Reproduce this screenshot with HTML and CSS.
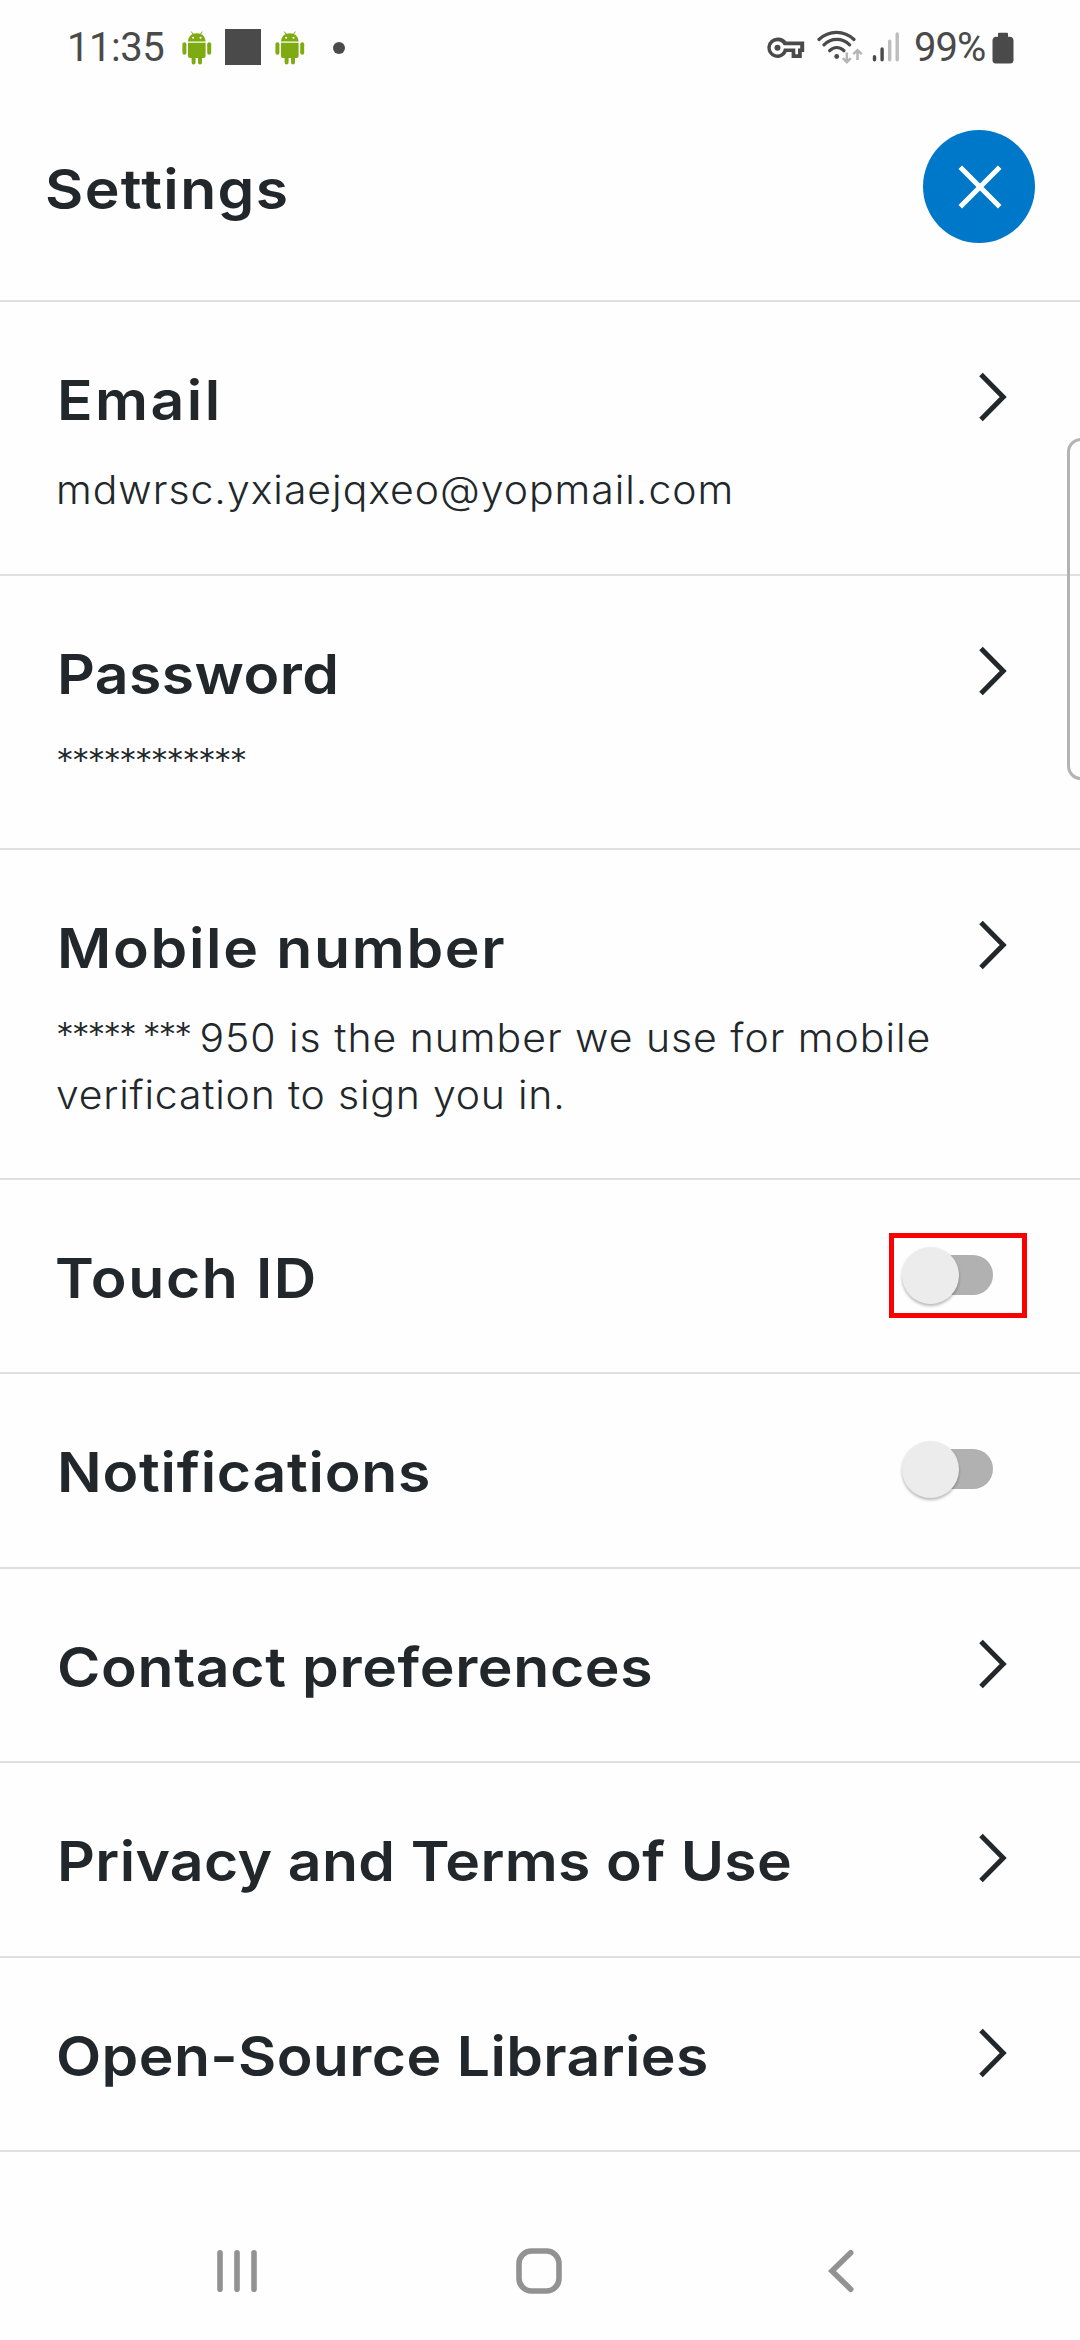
FILE: index.html
```html
<!DOCTYPE html>
<html lang="en">
<head>
<meta charset="utf-8">
<title>Settings</title>
<link rel="stylesheet" href="styles.css">
</head>
<body>
<svg class="defs" width="0" height="0" aria-hidden="true">
  <symbol id="android" viewBox="0 0 30 34">
    <path d="M6 10.500C6.300 5.500 9.500 2.300 14.800 2.300S23.300 5.500 23.600 10.500Z"/>
    <path d="M9.300 .6l2 3M20.300 .6l-2 3" stroke="#7fab12" stroke-width="1"/>
    <path d="M6 11.700h17.600v13.300a2 2 0 0 1-2 2h-1.600v4.500a2 2 0 0 1-4 0V27h-2.400v4.500a2 2 0 0 1-4 0V27H8a2 2 0 0 1-2-2Z"/>
    <rect x=".4" y="11.300" width="4" height="12.400" rx="2"/>
    <rect x="25.200" y="11.300" width="4" height="12.400" rx="2"/>
    <circle cx="11.100" cy="6.700" r="1" fill="#fff"/><circle cx="18.500" cy="6.700" r="1" fill="#fff"/>
  </symbol>
  <symbol id="chevron" viewBox="0 0 28 50">
    <path d="M2 2.500 24.200 25 2 47.500" fill="none" stroke="#21272a" stroke-width="5"/>
  </symbol>
</svg>
<div class="screen">
  <header class="status">
    <span class="clock">11:35</span>
    <svg class="droid" width="30" height="34"><use href="#android"/></svg>
    <span class="block"></span>
    <svg class="droid" width="30" height="34"><use href="#android"/></svg>
    <span class="dot"></span>
    <svg class="key" width="38" height="24" viewBox="0 0 38 24">
      <path fill-rule="evenodd" fill="#4a4a4a" d="M10.500 1.500a10.200 10.200 0 1 0 9.300 14.500h4.800v6h10.200v-6h2.400V5.500H19.300A10.200 10.200 0 0 0 10.500 1.500ZM10.500 5.300c2.700 0 5.100 1.500 6.200 4h16.500v3.300h-2.200v5.700h-2.700v-5.700H16.900a6.600 6.600 0 1 1-6.400-7.300Z"/>
      <circle cx="10.500" cy="11.700" r="3" fill="#4a4a4a"/>
    </svg>
    <svg class="wifi" width="46" height="36" viewBox="0 0 46 36">
      <g fill="none" stroke="#4a4a4a" stroke-width="3.200" stroke-linecap="round">
        <path d="M2 10.500C12 1 27 1 37 10.500M7 15.800c7.400-7.300 18.200-7.300 25.600 0M12.700 21.700c4-4.300 10.200-4.300 14.200 0"/>
      </g>
      <circle cx="19.700" cy="27.500" r="2.400" fill="#4a4a4a"/>
      <path d="M29.800 23.500v9M25.800 29.200l4 4 4-4M40.500 31v-9M36.300 25.200l4.200-4 4.200 4" fill="none" stroke="#b5b5b5" stroke-width="2.500"/>
    </svg>
    <svg class="signal" width="28" height="32" viewBox="0 0 28 32" stroke-width="3.400" stroke-linecap="round">
      <path d="M2.500 25.700v3M10.100 18v10.700" stroke="#4a4a4a"/>
      <path d="M17.700 10.200v18.500M25.200 3v25.700" stroke="#bdbdbd"/>
    </svg>
    <span class="percent">99%</span>
    <svg class="battery" width="22" height="32" viewBox="0 0 22 32">
      <path fill="#4a4a4a" d="M7 .7h8a1 1 0 0 1 1 1v3h1.500a4 4 0 0 1 4 4V28a3.500 3.500 0 0 1-3.500 3.500H4A3.500 3.500 0 0 1 .5 28V8.700a4 4 0 0 1 4-4H6v-3a1 1 0 0 1 1-1Z"/>
    </svg>
  </header>

  <div class="titlebar">
    <h1 class="title">Settings</h1>
    <button class="close" aria-label="Close">
      <svg width="44" height="44" viewBox="0 0 44 44"><path d="M2.300 2.300 41.700 41.700M41.700 2.300 2.300 41.700" stroke="#fff" stroke-width="5"/></svg>
    </button>
  </div>

  <main class="list">
    <section class="row tall">
      <div class="copy"><h2 class="name t-email">Email</h2><p class="note">mdwrsc.yxiaejqxeo@yopmail.com</p></div>
      <svg class="go" width="28" height="50"><use href="#chevron"/></svg>
    </section>
    <section class="row tall">
      <div class="copy"><h2 class="name t-password">Password</h2><p class="note"><span class="stars">************</span></p></div>
      <svg class="go" width="28" height="50"><use href="#chevron"/></svg>
    </section>
    <section class="row taller">
      <div class="copy"><h2 class="name t-mobile">Mobile number</h2><p class="note"><span class="stars">***** ***</span> <span class="n-first">950 is the number we use for mobile</span><br><span class="n-second">verification to sign you in.</span></p></div>
      <svg class="go" width="28" height="50"><use href="#chevron"/></svg>
    </section>
    <section class="row short">
      <h2 class="name t-touch">Touch ID</h2>
      <div class="switch"><span class="thumb"></span><span class="highlight"></span></div>
    </section>
    <section class="row">
      <h2 class="name t-notif">Notifications</h2>
      <div class="switch"><span class="thumb"></span></div>
    </section>
    <section class="row short">
      <h2 class="name t-contact">Contact preferences</h2>
      <svg class="go" width="28" height="50"><use href="#chevron"/></svg>
    </section>
    <section class="row">
      <h2 class="name t-privacy">Privacy and Terms of Use</h2>
      <svg class="go" width="28" height="50"><use href="#chevron"/></svg>
    </section>
    <section class="row short">
      <h2 class="name t-open">Open-Source Libraries</h2>
      <svg class="go" width="28" height="50"><use href="#chevron"/></svg>
    </section>
  </main>

  <nav class="softkeys">
    <svg width="46" height="48" viewBox="0 0 46 48"><path d="M6 5.700v36.600M23 5.700v36.600M40 5.700v36.600" stroke="#929292" stroke-width="5.600" stroke-linecap="round"/></svg>
    <svg class="home" width="48" height="48" viewBox="0 0 48 48"><rect x="4" y="4" width="40" height="40" rx="12.500" fill="none" stroke="#929292" stroke-width="5.600"/></svg>
    <svg width="30" height="48" viewBox="0 0 30 48"><path d="M24.700 5.800 6 24l18.700 18.200" fill="none" stroke="#929292" stroke-width="5.600" stroke-linecap="round"/></svg>
  </nav>
  <div class="edge-handle"></div>
</div>
</body>
</html>
```
FILE: styles.css
```css
* { box-sizing: border-box; }
body { margin: 0; background: #fefefe; }
.defs { position: absolute; }
.screen {
  position: relative;
  display: flex;
  flex-direction: column;
  width: 1080px;
  height: 2340px;
  overflow: hidden;
  background: #fefefe;
  color: #21272a;
  font-family: Inter, "Open Sans", sans-serif;
}

/* status bar */
.status {
  display: flex;
  align-items: center;
  height: 94px;
  padding: 0 66px 0 67px;
  color: #4a4a4a;
  font-family: Roboto, sans-serif;
  font-size: 40px;
}
.clock { width: 115px; white-space: nowrap; letter-spacing: -.5px; }
.droid { fill: #7fab12; margin-top: 1px; }
.block { width: 36px; height: 36px; margin: 0 14px 0 13px; background: #4a4a4a; }
.dot { width: 12px; height: 12px; margin: 2px auto 0 28px; border-radius: 50%; background: #4a4a4a; }
.key { margin: 2px 12px 0 0; }
.wifi { margin-right: 9px; }
.signal { margin-right: 14px; }
.percent { width: 78px; white-space: nowrap; letter-spacing: -1px; }
.battery { margin-top: 2px; }

/* title */
.titlebar {
  display: flex;
  justify-content: space-between;
  align-items: flex-start;
  height: 208px;
  padding: 36px 45px 0 45px;
  border-bottom: 2px solid #dfdfe3;
}
.title, .name {
  margin: 0;
  font-size: 55px;
  font-weight: 600;
  line-height: 66px;
  white-space: nowrap;
  transform: scaleX(1.07);
  transform-origin: left;
}
.title { margin-top: 26px; letter-spacing: 1.3px; }
.t-email { letter-spacing: 2.3px; }
.t-password { letter-spacing: .4px; }
.t-mobile { letter-spacing: 1.6px; }
.t-touch { letter-spacing: 1.5px; margin-left: -2px; }
.t-notif { letter-spacing: .7px; }
.t-contact { letter-spacing: .6px; }
.t-privacy { letter-spacing: .35px; }
.t-open { letter-spacing: .35px; margin-left: -1px; }
.close {
  display: grid;
  place-items: center;
  width: 112px;
  height: 113px;
  padding: 0 0 0 2px;
  border: 0;
  border-radius: 50%;
  background: #0078ca;
}

/* list */
.row {
  display: flex;
  justify-content: space-between;
  align-items: flex-start;
  height: 195px;
  padding: 65px 73px 0 57px;
  border-bottom: 2px solid #dfdfe3;
}
.row.short { height: 194px; }
.row.tall { height: 274px; }
.row.taller { height: 330px; }
.note {
  margin: 28px 0 0 -1px;
  font-size: 39px;
  font-weight: 300;
  line-height: 57px;
  letter-spacing: .93px;
  white-space: nowrap;
  transform: scaleX(1.05);
  transform-origin: left;
}
.stars {
  font-size: 34px;
  line-height: 0;
  letter-spacing: -2px;
  vertical-align: 5px;
}
.n-first { margin-left: -3px; }
.n-second { letter-spacing: .76px; }
.go { margin-top: 5px; }
.switch {
  position: relative;
  width: 80px;
  height: 40px;
  margin: 10px 14px 0 0;
  border-radius: 20px;
  background: #b1b1b1;
}
.thumb {
  position: absolute;
  left: -11px;
  top: -8px;
  width: 57px;
  height: 57px;
  border-radius: 50%;
  background: #ececec;
  box-shadow: 0 2px 3px rgba(0, 0, 0, .28);
}
.highlight {
  position: absolute;
  left: -24px;
  top: -22px;
  width: 138px;
  height: 85px;
  border: 5px solid #fb0000;
}

/* navigation keys */
.softkeys {
  display: flex;
  justify-content: space-between;
  align-items: center;
  height: 100px;
  margin-top: 69px;
  padding: 0 224px 0 214px;
}
.home { margin-right: 8px; }
.edge-handle {
  position: absolute;
  left: 1067px;
  top: 438px;
  width: 40px;
  height: 342px;
  border: 3px solid #b3b3b3;
  border-radius: 14px;
}
```
